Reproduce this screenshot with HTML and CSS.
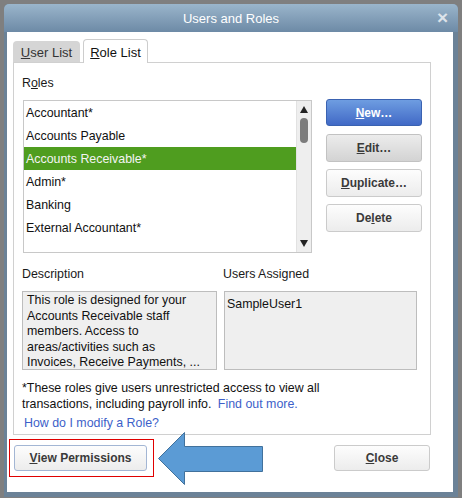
FILE: index.html
```html
<!DOCTYPE html>
<html>
<head>
<meta charset="utf-8">
<link rel="stylesheet" href="styles.css">
</head>
<body>
<div class="window">
  <div class="titlebar">
    <span class="title">Users and Roles</span>
    <span class="close-x">×</span>
  </div>
  <div class="content">
    <div class="tabs">
      <div class="tab tab-inactive"><u>U</u>ser List</div>
      <div class="tab tab-active"><u>R</u>ole List</div>
    </div>
    <div class="panel">
      <div class="label">R<u>o</u>les</div>
      <div class="roles-row">
        <div class="listbox">
          <div class="rows">
            <div class="row">Accountant*</div>
            <div class="row">Accounts Payable</div>
            <div class="row selected">Accounts Receivable*</div>
            <div class="row">Admin*</div>
            <div class="row">Banking</div>
            <div class="row">External Accountant*</div>
          </div>
          <div class="scrollbar">
            <div class="arrow-up"></div>
            <div class="thumb"></div>
            <div class="track"></div>
            <div class="arrow-down"></div>
          </div>
        </div>
        <div class="btn-col">
          <div class="btn btn-primary"><u>N</u>ew…</div>
          <div class="btn btn-pressed"><u>E</u>dit…</div>
          <div class="btn"><u>D</u>uplicate…</div>
          <div class="btn">De<u>l</u>ete</div>
        </div>
      </div>
      <div class="info-row">
        <div class="info-col desc-col">
          <div class="label">Description</div>
          <div class="box desc-box">This role is designed for your<br>Accounts Receivable staff<br>members. Access to<br>areas/activities such as<br>Invoices, Receive Payments, ...</div>
        </div>
        <div class="info-col users-col">
          <div class="label">Users Assigned</div>
          <div class="box users-box">SampleUser1</div>
        </div>
      </div>
      <div class="note">*These roles give users unrestricted access to view all<br>transactions, including payroll info. <span class="link find">Find out more.</span></div>
      <div class="link how">How do I modify a Role?</div>
    </div>
    <div class="bottom-row">
      <div class="highlight">
        <div class="btn btn-focus btn-view"><u>V</u>iew Permissions</div>
      </div>
      <div class="btn btn-close"><u>C</u>lose</div>
    </div>
  </div>
</div>
<svg class="annot-arrow" width="120" height="64" viewBox="150 428 120 64" xmlns="http://www.w3.org/2000/svg">
  <polygon points="158.5,458.5 184.5,432.5 184.5,446.5 262.5,446.5 262.5,471.5 184.5,471.5 184.5,484.5" fill="#5b9bd5" stroke="#41719c" stroke-width="1"/>
</svg>
</body>
</html>
```
FILE: styles.css
```css
html, body {
  margin: 0;
}
body {
  padding: 4px 4px 0 4px;
  background: #7f7f7f;
  position: relative;
  width: 462px;
  height: 498px;
  box-sizing: border-box;
  font-family: "Liberation Sans", Arial, sans-serif;
  font-size: 12.4px;
  color: #1e1e1e;
  overflow: hidden;
}
.window {
  width: 454px;
  height: 493px;
  background: #6b8297;
  border-radius: 5px 5px 0 0;
  padding: 0 5px 5px 3px;
  box-sizing: border-box;
  display: flex;
  flex-direction: column;
}
.titlebar {
  height: 28px;
  margin: 0 -5px 0 -3px;
  border-radius: 5px 5px 0 0;
  background: linear-gradient(#9ab5cb, #6d8aa6);
  display: flex;
  align-items: center;
  justify-content: center;
  position: relative;
}
.title {
  color: #ffffff;
  font-size: 13px;
}
.close-x {
  position: absolute;
  right: 10px;
  top: 4px;
  color: #dde3ea;
  font-size: 19px;
  font-weight: bold;
  line-height: 20px;
}
.content {
  flex: 1;
  background: #ffffff;
  padding: 7px 22px 0 6px;
  display: flex;
  flex-direction: column;
}
.tabs {
  display: flex;
  align-items: flex-end;
  height: 23px;
  gap: 3px;
}
.tab {
  box-sizing: border-box;
  border-radius: 4px 4px 0 0;
  display: flex;
  align-items: center;
  justify-content: center;
  font-size: 13px;
}
.tab-inactive {
  width: 67px;
  height: 21px;
  background: #d5d5d5;
  color: #333;
  padding-top: 1px;
}
.tab-active {
  width: 65px;
  height: 24px;
  margin-bottom: -1px;
  background: #ffffff;
  border: 1px solid #cdcdcd;
  border-bottom: none;
  position: relative;
  z-index: 1;
  color: #111;
  padding-top: 1px;
}
.panel {
  height: 373px;
  box-sizing: border-box;
  border: 1px solid #d0d0d0;
  padding: 12px 8px 0 8px;
}
.label {
  line-height: 16px;
  height: 16px;
  color: #1a1a1a;
}
.roles-row {
  display: flex;
  gap: 14px;
  margin-top: 9px;
  margin-left: 1px;
}
.listbox {
  width: 290px;
  height: 153px;
  box-sizing: border-box;
  border: 1px solid #c8c8c8;
  display: flex;
}
.rows {
  flex: 1;
}
.row {
  height: 23px;
  line-height: 24px;
  padding-left: 2px;
  color: #111;
  white-space: nowrap;
}
.row.selected {
  background: #4f9d1f;
  color: #f4f4f4;
}
.scrollbar {
  width: 15px;
  background: #eeeeee;
  border-left: 1px solid #e2e2e2;
  display: flex;
  flex-direction: column;
  align-items: center;
  box-sizing: border-box;
}
.arrow-up {
  margin-top: 5px;
  width: 0;
  height: 0;
  border-left: 4px solid transparent;
  border-right: 4px solid transparent;
  border-bottom: 7px solid #222;
}
.thumb {
  margin-top: 5px;
  width: 8px;
  height: 25px;
  border-radius: 4px;
  background: #7c7c7c;
}
.track {
  flex: 1;
}
.arrow-down {
  margin-bottom: 5px;
  width: 0;
  height: 0;
  border-left: 4px solid transparent;
  border-right: 4px solid transparent;
  border-top: 7px solid #222;
}
.btn-col {
  display: flex;
  flex-direction: column;
  gap: 7px;
  margin-top: -1px;
}
.btn {
  width: 96px;
  height: 28px;
  box-sizing: border-box;
  border: 1px solid #cbcbcb;
  border-radius: 3px;
  background: linear-gradient(#fdfdfd, #ececec);
  display: flex;
  align-items: center;
  justify-content: center;
  font-size: 12px;
  font-weight: bold;
  color: #3a3a3a;
}
.btn-primary {
  height: 27px;
  margin-bottom: 1px;
  background: linear-gradient(#6e9de1, #4169c6);
  border-color: #3a62b1;
  color: #ffffff;
}
.btn-pressed {
  background: linear-gradient(#ececec, #d3d3d3);
  border-color: #c2c2c2;
}
.info-row {
  display: flex;
  gap: 7px;
  margin-top: 13px;
}
.info-col .label {
  margin-bottom: 9px;
}
.users-col .label {
  margin-left: -1px;
}
.box {
  height: 79px;
  box-sizing: border-box;
  border: 1px solid #bdbdbd;
  background: #efefef;
  color: #111;
}
.desc-box {
  width: 195px;
  padding: 1px 4px 0 4px;
  line-height: 15.5px;
  overflow: hidden;
  white-space: nowrap;
}
.users-box {
  width: 193px;
  padding: 4px 2px 0 2px;
  line-height: 16px;
}
.note {
  margin-top: 10px;
  line-height: 16px;
  color: #111;
}
.link {
  color: #3d5fc9;
}
.find {
  margin-left: 3px;
}
.how {
  margin-top: 3px;
  margin-left: 2px;
  line-height: 16px;
}
.bottom-row {
  display: flex;
  justify-content: space-between;
  align-items: flex-start;
  margin-top: 4px;
  margin-left: -4px;
  margin-right: 1px;
}
.highlight {
  border: 1px solid #e00000;
  padding: 5px 6px 5px 4px;
}
.btn-view {
  width: 133px;
  height: 26px;
  border-color: #a3b6d4;
}
.btn-close {
  margin-top: 6px;
  height: 26px;
}
.annot-arrow {
  position: absolute;
  left: 150px;
  top: 428px;
}
```
